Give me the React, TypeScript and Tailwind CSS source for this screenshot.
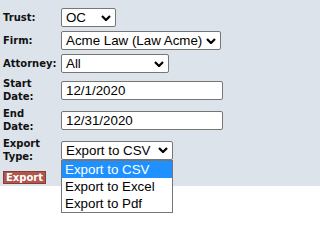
import React from 'react';

// Export form: old-style table layout with labels on the left, controls on the right.

function Chevron() {
  return (
    <svg width="10" height="6" viewBox="0 0 10 6" className="shrink-0">
      <path d="M1 1 L5 5 L9 1" fill="none" stroke="#000" strokeWidth="2.2" />
    </svg>
  );
}

interface FakeSelectProps {
  value: string;
  width: string;
  children?: React.ReactNode;
}

function FakeSelect({ value, width, children }: FakeSelectProps) {
  return (
    <div className={`relative ${width}`}>
      <div className="flex h-[19px] items-center justify-between rounded-[2px] border border-[#767676] bg-white pl-[4px] pr-[4px] text-[13.33px] leading-[15px] text-black">
        <span className="whitespace-nowrap">{value}</span>
        <Chevron />
      </div>
      {children}
    </div>
  );
}

function TextBox({ value }: { value: string }) {
  return (
    <div className="flex h-[19px] w-[162px] items-center rounded-[2px] border border-[#767676] bg-white pl-[4px] text-[13.33px] leading-[15px] text-black">
      {value}
    </div>
  );
}

function Row({ label, height, children }: { label: React.ReactNode; height: string; children?: React.ReactNode }) {
  return (
    <div className={`flex items-center ${height}`}>
      <div className="w-[61px] shrink-0 pl-[3px] text-[10px] font-bold leading-[13px] text-[#111]">
        {label}
      </div>
      <div className="font-['Liberation_Sans',Arial,sans-serif]">{children}</div>
    </div>
  );
}

const exportOptions = ['Export to CSV', 'Export to Excel', 'Export to Pdf'];

export default function App() {
  return (
    <div className="h-[221px] w-full bg-white font-['Liberation_Sans',Arial,sans-serif]">
      <div className="h-[186px] bg-[#dce3ea] pt-[6px]">
        <div className="font-['DejaVu_Sans',Verdana,sans-serif]">
          <Row label="Trust:" height="h-[23px]">
            <FakeSelect value="OC" width="w-[55px]" />
          </Row>
          <Row label="Firm:" height="h-[23px]">
            <FakeSelect value="Acme Law (Law Acme)" width="w-[160px]" />
          </Row>
          <Row label="Attorney:" height="h-[23px]">
            <FakeSelect value="All" width="w-[108px]" />
          </Row>
          <Row label={<>Start<br />Date:</>} height="h-[30px]">
            <TextBox value="12/1/2020" />
          </Row>
          <Row label={<>End<br />Date:</>} height="h-[30px]">
            <TextBox value="12/31/2020" />
          </Row>
          <Row label={<>Export<br />Type:</>} height="h-[30px]">
            <FakeSelect value="Export to CSV" width="w-[112px]">
              {/* open dropdown list */}
              <div className="absolute left-0 top-full z-10 w-full border border-[#767676] bg-white text-[13.33px] leading-[15px]">
                {exportOptions.map((opt, i) => (
                  <div
                    key={opt}
                    className={`flex h-[17px] items-center whitespace-nowrap pl-[3px] ${i === 0 ? 'bg-[#1e90ff] text-white' : 'text-black'}`}
                  >
                    {opt}
                  </div>
                ))}
              </div>
            </FakeSelect>
          </Row>
          <div className="flex h-[21px] items-end pb-[2px] pl-[3px]">
            <button className="flex h-[13px] items-center border border-[#8a3a32] bg-[#b0564c] px-[2px] text-[10px] font-bold leading-[11px] text-white">
              Export
            </button>
          </div>
        </div>
      </div>
    </div>
  );
}
